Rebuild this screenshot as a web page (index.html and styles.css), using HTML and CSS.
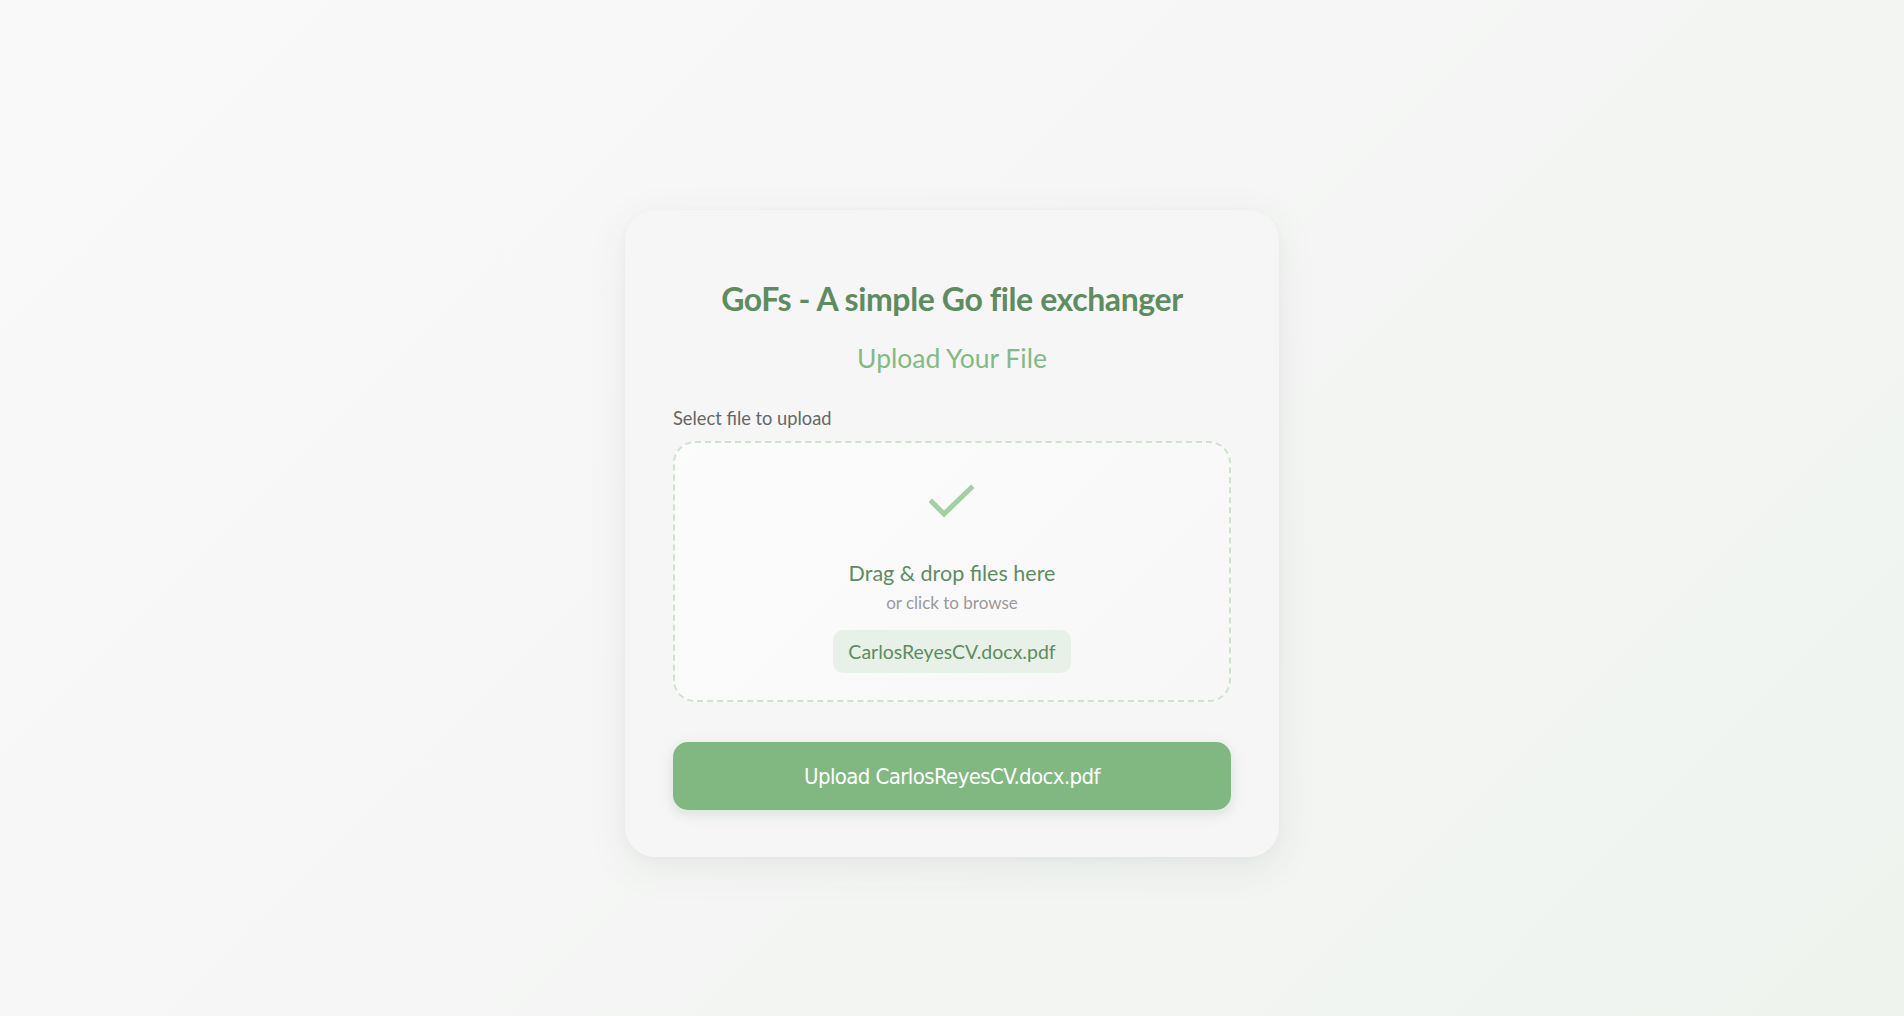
FILE: index.html
```html
<!DOCTYPE html>
<html lang="en">
<head>
<meta charset="utf-8">
<title>GoFs</title>
<link rel="stylesheet" href="styles.css">
</head>
<body>
<main class="page">
  <section class="card">
    <h1 class="title">GoFs - A simple Go file exchanger</h1>
    <h2 class="subtitle">Upload Your File</h2>
    <form class="form">
      <label class="label">Select file to upload</label>
      <div class="dropzone">
        <svg class="check" width="46" height="36" viewBox="0 0 46 36" fill="none">
          <path d="M3 17 L15 29 L42 3" stroke="#a3cfa3" stroke-width="5" stroke-linecap="square" stroke-linejoin="miter"/>
        </svg>
        <p class="drop-title">Drag &amp; drop files here</p>
        <p class="drop-sub">or click to browse</p>
        <span class="chip">CarlosReyesCV.docx.pdf</span>
      </div>
      <button type="button" class="btn">Upload CarlosReyesCV.docx.pdf</button>
    </form>
  </section>
</main>
</body>
</html>
```

FILE: styles.css
```css
* { box-sizing: border-box; }
html, body { margin: 0; height: 100%; }
body {
  font-family: "Lato", "Noto Sans", sans-serif;
  background: linear-gradient(135deg, #f9f9f9 0%, #f5f6f5 50%, #eef3ee 100%);
}
.page {
  padding-top: 210px;
  display: flex;
  justify-content: center;
}
.card {
  width: 654px;
  background: #f6f6f6;
  border-radius: 30px;
  padding: 70px 48px 47px;
  box-shadow: 0 10px 40px rgba(60, 80, 60, 0.08), 0 2px 8px rgba(0,0,0,0.03);
}
.title {
  margin: 0;
  text-align: center;
  font-size: 32px;
  font-weight: 700;
  color: #5e8c61;
  letter-spacing: -0.4px;
  line-height: 38px;
}
.subtitle {
  margin: 24px 0 0;
  text-align: center;
  font-size: 26.5px;
  font-weight: 400;
  color: #82bb82;
  line-height: 32px;
}
.form { margin-top: 33px; }
.label {
  display: block;
  font-size: 18.3px;
  color: #666;
  line-height: 22px;
  margin-bottom: 12px;
}
.dropzone {
  height: 261px;
  border: 2px dashed #cde3cd;
  border-radius: 22px;
  background: linear-gradient(135deg, #fcfcfc, #f7f7f7);
  display: flex;
  flex-direction: column;
  align-items: center;
  padding-top: 42px;
}
.check { display: block; }
.drop-title {
  margin: 39px 0 0;
  font-size: 21.5px;
  color: #5e8c61;
  line-height: 26px;
}
.drop-sub {
  margin: 7px 0 0;
  font-size: 17px;
  color: #999;
  line-height: 20px;
}
.chip {
  margin-top: 17px;
  height: 43px;
  padding: 0 15px;
  display: flex;
  align-items: center;
  background: #e8f1e8;
  border-radius: 10px;
  font-size: 19.5px;
  color: #5e8c61;
}
.btn {
  display: block;
  width: 100%;
  margin-top: 40px;
  height: 68px;
  border: 0;
  border-radius: 15px;
  background: #81b881;
  color: #fff;
  font-family: "DejaVu Sans Condensed", "DejaVu Sans", sans-serif;
  font-size: 22px;
  letter-spacing: -0.6px;
  box-shadow: 0 4px 14px rgba(90, 140, 90, 0.2);
}
```
